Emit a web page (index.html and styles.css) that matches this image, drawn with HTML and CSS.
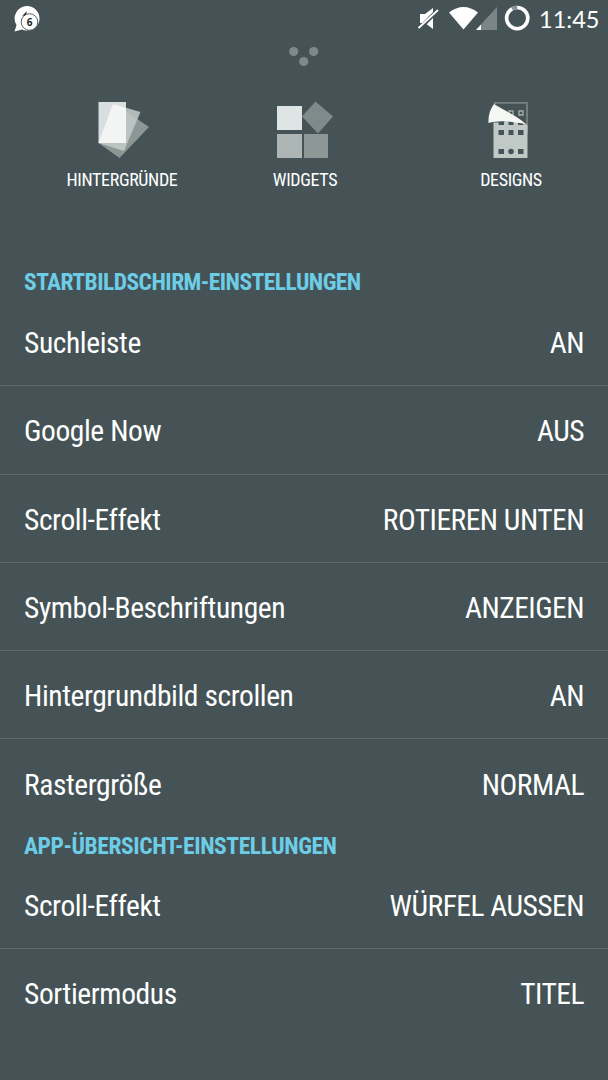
FILE: index.html
```
<!DOCTYPE html>
<html lang="de">
<head>
    <meta charset="UTF-8">
    <meta name="viewport" content="width=device-width, initial-scale=1.0">
    <title>Einstellungen</title>
    <link rel="stylesheet" href="styles.css">
</head>
<body>
    <header class="statusbar">
        <svg class="notification" width="28" height="32" viewBox="0 0 28 32">
            <path d="M13 6a12.500 12.500 0 0 1 12.500 12.500c0 7-5.500 12-12.500 12-2 0-3.500-.3-5-1L0.500 31.500l2-6.500A12.500 12.500 0 0 1 13 6z" fill="#fff"/>
            <circle cx="15.500" cy="22" r="8.300" fill="#fff" stroke="#59605f" stroke-width="1"/>
            <path d="M8 16l5-5-1 4z" fill="#333"/>
            <text class="count" x="15.500" y="25.500" text-anchor="middle">6</text>
        </svg>
        <div class="status-icons">
            <svg width="112" height="36" viewBox="418 0 112 36">
                <path d="M420 14h5l8-6v21l-8-6h-5z" fill="#fff"/>
                <path d="M419 29L438 10" stroke="#455356" stroke-width="4"/>
                <path d="M418.500 28L438 10" stroke="#fff" stroke-width="1.800"/>
                <path d="M449 12.500q14.500-11 29 0L463.500 29.500z" fill="#fff"/>
                <path d="M476 30L497 7v23z" fill="#7b8586"/>
                <path d="M476 30l5-5.500V30z" fill="#fff"/>
                <circle cx="517.200" cy="18.100" r="10.600" fill="none" stroke="#fff" stroke-width="3.600"/>
                <path d="M512 8.800a10.600 10.600 0 0 1 5.200-1.300" fill="none" stroke="#8b9495" stroke-width="3.800"/>
            </svg>
            <span class="clock">11:45</span>
        </div>
    </header>

    <div class="handle">
        <svg width="32" height="22" viewBox="0 0 32 22" fill="#7e898a">
            <circle cx="5.700" cy="5.500" r="4.600"/>
            <circle cx="25.700" cy="5.500" r="4.600"/>
            <circle cx="15.700" cy="15.500" r="4.600"/>
        </svg>
    </div>

    <nav class="actions">
        <a class="action">
            <svg width="60" height="60" viewBox="92 100 60 60">
                <path d="M121 108l28 19-29.500 31L98.500 143z" fill="#8b9695"/>
                <path d="M113 104l27.500 8-16.500 39L98.500 143z" fill="#c4ccca" fill-opacity=".85"/>
                <path d="M98.500 102H126v41H98.500z" fill="#e6ebe9" fill-opacity=".92"/>
                <path d="M113 104l13 4v35H98.500z" fill="#fff" fill-opacity=".55"/>
            </svg>
            <span class="action-label">HINTERGRÜNDE</span>
        </a>
        <a class="action">
            <svg width="60" height="60" viewBox="275 100 60 60">
                <path d="M277 106h25v24h-25z" fill="#dfe5e4"/>
                <path d="M277 134h25v24h-25z" fill="#adb6b5"/>
                <path d="M304 134h24v24h-24z" fill="#8d9896"/>
                <path d="M315.500 101.500L333 116.500l-15 17-16-17z" fill="#7f8b8b"/>
            </svg>
            <span class="action-label">WIDGETS</span>
        </a>
        <a class="action">
            <svg width="60" height="60" viewBox="481 100 60 60">
                <path d="M494.500 102.800h32.500V133h-32.500z" fill="none" stroke="#899493" stroke-width="1.300"/>
                <path d="M509 111h4v4h-4zM519 111h4v4h-4z" fill="none" stroke="#a7b0ae" stroke-width="1.300"/>
                <path d="M493.500 123l20-3 14 5v33h-34z" fill="#c1c9c7"/>
                <path d="M498.500 120h5.500v5h-5.500zM508.500 120h5v5h-5zM518 121h5.500v4h-5.500zM498.500 130h5.500v5h-5.500zM508.500 130h5v5h-5zM518 130h5.500v5h-5.500zM498.500 149h5.500v5h-5.500zM518 149h5.500v5h-5.500z" fill="#455356"/>
                <circle cx="511" cy="151.500" r="2.800" fill="#455356"/>
                <path d="M494 104c-4 5-6 12-5.500 19 8-2 18-3 38 1.500C514 114 503 110 494 104z" fill="#f4f7f4"/>
            </svg>
            <span class="action-label">DESIGNS</span>
        </a>
    </nav>

    <main class="settings">
        <h2 class="section-title">STARTBILDSCHIRM-EINSTELLUNGEN</h2>
        <ul class="list">
            <li class="row"><span>Suchleiste</span><span class="value">AN</span></li>
            <li class="row"><span>Google Now</span><span class="value">AUS</span></li>
            <li class="row"><span>Scroll-Effekt</span><span class="value">ROTIEREN UNTEN</span></li>
            <li class="row"><span>Symbol-Beschriftungen</span><span class="value">ANZEIGEN</span></li>
            <li class="row"><span>Hintergrundbild scrollen</span><span class="value">AN</span></li>
            <li class="row"><span>Rastergröße</span><span class="value">NORMAL</span></li>
        </ul>
        <h2 class="section-title app-title">APP-ÜBERSICHT-EINSTELLUNGEN</h2>
        <ul class="list">
            <li class="row"><span>Scroll-Effekt</span><span class="value">WÜRFEL AUSSEN</span></li>
            <li class="row"><span>Sortiermodus</span><span class="value">TITEL</span></li>
        </ul>
    </main>
</body>
</html>
```
FILE: styles.css
```
* {
    box-sizing: border-box;
}
body {
    margin: 0;
    height: 1080px;
    overflow: hidden;
    background-color: #455356;
    color: #fff;
    font-family: "Roboto Condensed", Roboto, sans-serif;
    font-stretch: 75%;
}
.statusbar {
    display: flex;
    justify-content: space-between;
    height: 46px;
    padding: 0 9px 0 14px;
}
.count {
    font: bold 10px "Open Sans", sans-serif;
    fill: #222;
}
.status-icons {
    display: flex;
    gap: 9px;
}
.clock {
    width: 60px;
    font: 23.5px/38px Lato, sans-serif;
    white-space: nowrap;
}
.handle {
    display: flex;
    justify-content: center;
    height: 54px;
}
.actions {
    display: flex;
    height: 164px;
    padding-left: 52px;
}
.action {
    display: flex;
    flex-direction: column;
    align-items: center;
    width: 140px;
    margin-right: 43px;
}
.action:nth-child(2) {
    margin-right: 66px;
}
.action:last-child {
    margin-right: 0;
}
.action-label {
    margin-top: 8px;
    font-size: 18px;
    font-weight: 450;
    line-height: 24px;
    letter-spacing: -0.35px;
}
.section-title {
    margin: 0;
    padding-left: 24px;
    height: 34px;
    font-size: 23.5px;
    line-height: 36px;
    letter-spacing: -0.54px;
    color: #6dcde6;
}
.app-title {
    height: 33.2px;
    letter-spacing: -0.42px;
}
.list {
    margin: 0;
    padding: 0;
    list-style: none;
}
.row {
    display: flex;
    justify-content: space-between;
    align-items: center;
    height: 88.3px;
    padding: 3px 24px 0;
    font-size: 29.5px;
    font-weight: 450;
    letter-spacing: -0.4px;
    border-bottom: 1px solid #5e6c6d;
}
.row:last-child {
    padding-top: 2px;
    border-bottom: none;
}
.value {
    letter-spacing: -0.52px;
}
```
